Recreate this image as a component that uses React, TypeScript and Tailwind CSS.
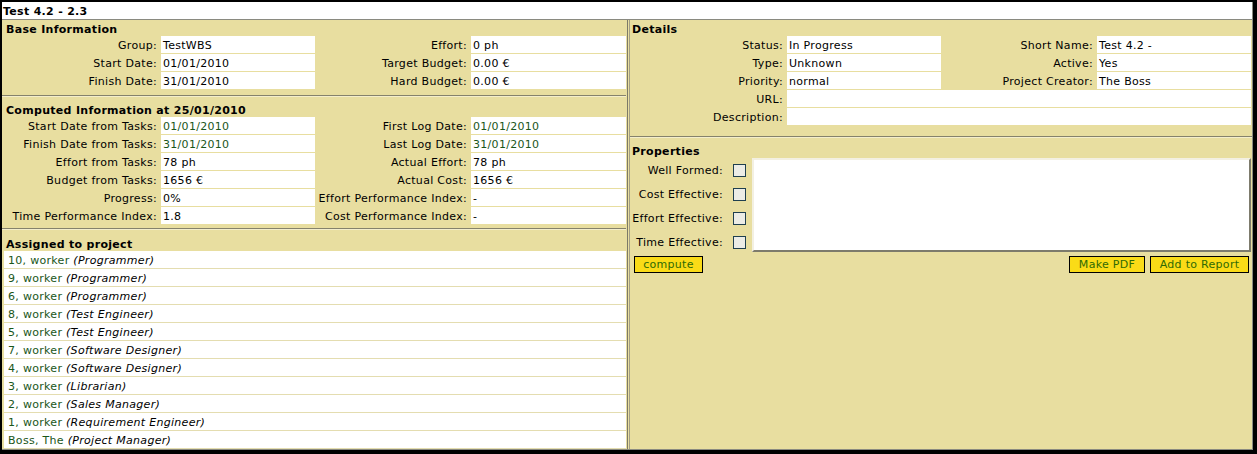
import React from "react";

type Cell = { text: string; green?: boolean };
type Row4 = [string, Cell, string, Cell];

const G = "text-[#1a561a]";

function Label({ text }: { text: string }) {
  return (
    <div className="h-[17px] whitespace-nowrap pr-[4px] text-right leading-[19px]" dir="rtl">
      <span dir="ltr">{text}</span>
    </div>
  );
}

function Value({ cell, span }: { cell: Cell; span?: boolean }) {
  return (
    <div
      className={`h-[17px] overflow-hidden whitespace-nowrap bg-white pl-[2px] leading-[19px] ${
        cell.green ? G : ""
      } ${span ? "col-span-3" : ""}`}
    >
      {cell.text}
    </div>
  );
}

function Header({ text, extra }: { text: string; extra: string }) {
  return <div className={`h-[16px] whitespace-nowrap font-bold leading-[20px] ${extra}`}>{text}</div>;
}

function Hr({ extra }: { extra?: string }) {
  return <div className={`h-[2px] border-t border-b border-t-[#85826c] border-b-[#f4eecb] ${extra ?? ""}`} />;
}

const base: Row4[] = [
  ["Group:", { text: "TestWBS" }, "Effort:", { text: "0 ph" }],
  ["Start Date:", { text: "01/01/2010" }, "Target Budget:", { text: "0.00 €" }],
  ["Finish Date:", { text: "31/01/2010" }, "Hard Budget:", { text: "0.00 €" }],
];

const computed: Row4[] = [
  ["Start Date from Tasks:", { text: "01/01/2010", green: true }, "First Log Date:", { text: "01/01/2010", green: true }],
  ["Finish Date from Tasks:", { text: "31/01/2010", green: true }, "Last Log Date:", { text: "31/01/2010", green: true }],
  ["Effort from Tasks:", { text: "78 ph" }, "Actual Effort:", { text: "78 ph" }],
  ["Budget from Tasks:", { text: "1656 €" }, "Actual Cost:", { text: "1656 €" }],
  ["Progress:", { text: "0%" }, "Effort Performance Index:", { text: "-" }],
  ["Time Performance Index:", { text: "1.8" }, "Cost Performance Index:", { text: "-" }],
];

const details: Row4[] = [
  ["Status:", { text: "In Progress" }, "Short Name:", { text: "Test 4.2 -" }],
  ["Type:", { text: "Unknown" }, "Active:", { text: "Yes" }],
  ["Priority:", { text: "normal" }, "Project Creator:", { text: "The Boss" }],
];

const people: [string, string][] = [
  ["10, worker", "(Programmer)"],
  ["9, worker", "(Programmer)"],
  ["6, worker", "(Programmer)"],
  ["8, worker", "(Test Engineer)"],
  ["5, worker", "(Test Engineer)"],
  ["7, worker", "(Software Designer)"],
  ["4, worker", "(Software Designer)"],
  ["3, worker", "(Librarian)"],
  ["2, worker", "(Sales Manager)"],
  ["1, worker", "(Requirement Engineer)"],
  ["Boss, The", "(Project Manager)"],
];

const props = ["Well Formed:", "Cost Effective:", "Effort Effective:", "Time Effective:"];

function Btn({ text, w }: { text: string; w: string }) {
  return (
    <div
      className={`flex h-[17px] items-center justify-center border border-black bg-[#fadb17] leading-[16px] text-[#2f6a05] ${w}`}
    >
      {text}
    </div>
  );
}

export default function App() {
  return (
    <div className="h-[454px] w-[1257px] border-t-2 border-l-2 border-r-4 border-b-4 border-black bg-white font-['DejaVu_Sans',Verdana,sans-serif] text-[11px] tracking-[0.3px] text-black">
      <div className="flex h-full flex-col border-r border-b border-[#8a8a80]">
        <div className="h-[18px] border-b border-[#8a8a80] bg-white pl-px font-bold leading-[19px]">Test 4.2 - 2.3</div>
        <div className="flex flex-1 bg-[#e8dea0]">
          {/* Left column */}
          <div className="flex w-[626px] flex-col border-r border-[#7c7a68]">
            <Header text="Base Information" extra="pl-[4px]" />
            <div className="grid grid-cols-[159px_154px_156px_155px] gap-y-px">
              {base.map((r, i) => (
                <React.Fragment key={i}>
                  <Label text={r[0]} />
                  <Value cell={r[1]} />
                  <Label text={r[2]} />
                  <Value cell={r[3]} />
                </React.Fragment>
              ))}
            </div>
            <Hr extra="mt-[6px] mr-px" />
            <Header text="Computed Information at 25/01/2010" extra="mt-[4px] pl-[4px]" />
            <div className="grid grid-cols-[159px_154px_156px_155px] gap-y-px">
              {computed.map((r, i) => (
                <React.Fragment key={i}>
                  <Label text={r[0]} />
                  <Value cell={r[1]} />
                  <Label text={r[2]} />
                  <Value cell={r[3]} />
                </React.Fragment>
              ))}
            </div>
            <Hr extra="mt-[4px] mr-px" />
            <Header text="Assigned to project" extra="mt-[5px] pl-[4px]" />
            <div className="ml-[2px] mr-px flex flex-col">
              {people.map(([n, role], i) => (
                <div
                  key={i}
                  className="h-[18px] whitespace-nowrap border-b border-[#e4ddb0] bg-white pl-[4px] leading-[19px]"
                >
                  <span className={G}>{n}</span> <span className="italic">{role}</span>
                </div>
              ))}
            </div>
          </div>

          {/* Right column */}
          <div className="ml-px flex flex-1 flex-col border-l border-[#a29e86]">
            <Header text="Details" extra="pl-[2px]" />
            <div className="grid grid-cols-[157px_154px_156px_154px] gap-y-px">
              {details.map((r, i) => (
                <React.Fragment key={i}>
                  <Label text={r[0]} />
                  <Value cell={r[1]} />
                  <Label text={r[2]} />
                  <Value cell={r[3]} />
                </React.Fragment>
              ))}
              <Label text="URL:" />
              <Value cell={{ text: "" }} span />
              <Label text="Description:" />
              <Value cell={{ text: "" }} span />
            </div>
            <Hr extra="mt-[11px]" />
            <Header text="Properties" extra="mt-[4px] pl-[2px]" />
            <div className="flex">
              <div className="flex flex-col">
                {props.map((p) => (
                  <div key={p} className="flex h-[24px] items-center">
                    <div className="w-[93px] whitespace-nowrap pt-px text-right leading-[18px]">{p}</div>
                    <span className="ml-[10px] block h-[13px] w-[13px] border border-[#1f3f4f] bg-[#ecece6]" />
                  </div>
                ))}
              </div>
              <div className="ml-[6px] h-[94px] w-[499px] border-2 border-t-[#f3f0e2] border-l-[#f3f0e2] border-r-[#7d7b6c] border-b-[#7d7b6c] bg-white" />
            </div>
            <div className="mt-[2px] flex items-center pl-[4px] pr-[3px]">
              <Btn text="compute" w="w-[69px]" />
              <div className="flex-1" />
              <Btn text="Make PDF" w="w-[76px]" />
              <div className="w-[5px]" />
              <Btn text="Add to Report" w="w-[99px]" />
            </div>
          </div>
        </div>
      </div>
    </div>
  );
}
